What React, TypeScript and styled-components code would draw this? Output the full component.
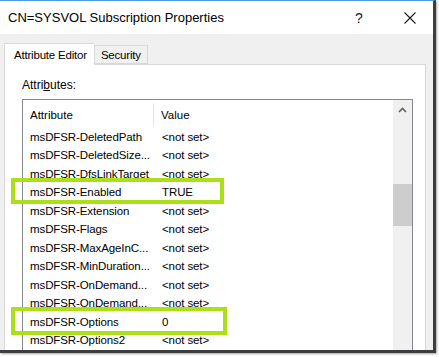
import React from 'react';
import styled, { createGlobalStyle } from 'styled-components';

const GlobalStyle = createGlobalStyle`
  html, body {
    margin: 0;
    padding: 0;
    background: #ffffff;
  }
  body {
    font-family: "Liberation Sans", Arial, sans-serif;
    overflow: hidden;
  }
`;

/** Screenshot frame */
const Frame = styled.div`
  position: relative;
  width: 439px;
  height: 357px;
  background: #ffffff;
  overflow: hidden;
`;

const Window = styled.div`
  display: flex;
  flex-direction: column;
  width: 433px;
  height: 349px;
  border-top: 1px solid #4a9be0;
  border-right: 3px solid #3d3d3d;
  border-bottom: 3px solid #3d3d3d;
  box-shadow: 1px 1px 2px rgba(0, 0, 0, 0.35);
  background: #ffffff;
`;

/** Title bar */
const TitleBar = styled.div`
  display: flex;
  align-items: center;
  height: 33px;
  padding-left: 8px;
  background: #ffffff;
  flex: 0 0 auto;
`;
const Title = styled.span`
  flex: 1 1 auto;
  font-size: 13px;
  color: #000000;
  white-space: nowrap;
`;
const CaptionButton = styled.div<{ $gap?: number }>`
  display: flex;
  align-items: center;
  justify-content: center;
  width: 46px;
  height: 33px;
  margin-right: ${props => props.$gap || 0}px;
  font-size: 14px;
  color: #1a1a1a;
`;

/** Dialog body */
const Body = styled.div`
  display: flex;
  flex-direction: column;
  flex: 1 1 auto;
  min-height: 0;
  padding: 9px 7px 0 4px;
  background: #f0f0f0;
`;
const TabStrip = styled.div`
  display: flex;
  align-items: flex-end;
  height: 21px;
  position: relative;
  z-index: 1;
`;
const Tab = styled.div<{ $active?: boolean }>`
  display: flex;
  align-items: center;
  box-sizing: border-box;
  padding: 0 ${props => (props.$active ? '7px 0 9px' : '6px')};
  height: ${props => (props.$active ? '22px' : '19px')};
  margin-bottom: ${props => (props.$active ? '-1px' : '0')};
  border: 1px solid #d9d9d9;
  border-bottom: ${props => (props.$active ? 'none' : '1px solid #d9d9d9')};
  ${props => (props.$active ? 'border-right: none;' : 'border-left: 1px solid #d9d9d9;')}
  background: ${props => (props.$active ? '#ffffff' : '#f0f0f0')};
  font-size: 11.5px;
  color: #000000;
  letter-spacing: -0.2px;
  white-space: nowrap;
`;
const Panel = styled.div`
  display: flex;
  flex-direction: column;
  flex: 1 1 auto;
  min-height: 0;
  padding: 0 12px 0 17px;
  background: #ffffff;
  border: 1px solid #d9d9d9;
  border-bottom: none;
`;
const Label = styled.div`
  height: 34px;
  padding-top: 13px;
  box-sizing: border-box;
  font-size: 12px;
  color: #000000;
`;
const Accel = styled.span`
  text-decoration: underline;
`;

/** Attribute list */
const ListBox = styled.div`
  display: flex;
  flex: 1 1 auto;
  min-height: 0;
  border: 1px solid #828790;
  border-bottom: none;
  background: #ffffff;
`;
const Table = styled.div`
  flex: 1 1 auto;
  display: flex;
  flex-direction: column;
`;
const HeaderRow = styled.div`
  display: flex;
  height: 27.5px;
  padding-top: 3px;
  box-sizing: border-box;
`;
const HeaderCell = styled.div<{ $first?: boolean }>`
  display: flex;
  align-items: center;
  box-sizing: border-box;
  height: 23px;
  width: ${props => (props.$first ? '131px' : 'auto')};
  padding-left: 7px;
  border-right: ${props => (props.$first ? '1px solid #e5e5e5' : 'none')};
  font-size: 11.5px;
  color: #000000;
`;
const Row = styled.div`
  display: flex;
  align-items: center;
  height: 18.5px;
  font-size: 11.5px;
  letter-spacing: -0.1px;
  color: #000000;
  white-space: nowrap;
`;
const NameCell = styled.span`
  width: 131px;
  padding-left: 7px;
  box-sizing: border-box;
`;
const ValueCell = styled.span`
  padding-left: 8px;
`;

const ScrollBar = styled.div`
  display: flex;
  flex-direction: column;
  width: 19px;
  background: #f0f0f0;
  flex: 0 0 auto;
`;
const ScrollArrow = styled.div`
  display: flex;
  align-items: center;
  justify-content: center;
  height: 20px;
  color: #606060;
`;
const Thumb = styled.div`
  margin-top: 64px;
  height: 42px;
  background: #cdcdcd;
`;

/** Annotation boxes drawn over the screenshot */
const Highlight = styled.div<{ $x: number; $y: number; $w: number; $h: number }>`
  position: absolute;
  left: ${props => props.$x}px;
  top: ${props => props.$y}px;
  width: ${props => props.$w}px;
  height: ${props => props.$h}px;
  box-sizing: border-box;
  border: 4px solid #acdf18;
`;

const rows: [string, string][] = [
  ['msDFSR-DeletedPath', '<not set>'],
  ['msDFSR-DeletedSize...', '<not set>'],
  ['msDFSR-DfsLinkTarget', '<not set>'],
  ['msDFSR-Enabled', 'TRUE'],
  ['msDFSR-Extension', '<not set>'],
  ['msDFSR-Flags', '<not set>'],
  ['msDFSR-MaxAgeInC...', '<not set>'],
  ['msDFSR-MinDuration...', '<not set>'],
  ['msDFSR-OnDemand...', '<not set>'],
  ['msDFSR-OnDemand...', '<not set>'],
  ['msDFSR-Options', '0'],
  ['msDFSR-Options2', '<not set>'],
];

export default function App(): JSX.Element {
  return (
    <Frame>
      <GlobalStyle />
      <Window>
        <TitleBar>
          <Title>CN=SYSVOL Subscription Properties</Title>
          <CaptionButton $gap={5}>?</CaptionButton>
          <CaptionButton>
            <svg width="12" height="12" viewBox="0 0 12 12">
              <path d="M0.5 0.5 L11.5 11.5 M11.5 0.5 L0.5 11.5" stroke="#1a1a1a" strokeWidth="1.1" />
            </svg>
          </CaptionButton>
        </TitleBar>
        <Body>
          <TabStrip>
            <Tab $active>Attribute Editor</Tab>
            <Tab>Security</Tab>
          </TabStrip>
          <Panel>
            <Label>
              Attri<Accel>b</Accel>utes:
            </Label>
            <ListBox>
              <Table>
                <HeaderRow>
                  <HeaderCell $first>Attribute</HeaderCell>
                  <HeaderCell>Value</HeaderCell>
                </HeaderRow>
                {rows.map(([name, value], i) => (
                  <Row key={i}>
                    <NameCell>{name}</NameCell>
                    <ValueCell>{value}</ValueCell>
                  </Row>
                ))}
              </Table>
              <ScrollBar>
                <ScrollArrow>
                  <svg width="9" height="6" viewBox="0 0 9 6">
                    <path d="M1 5 L4.5 1.5 L8 5" fill="none" stroke="#606060" strokeWidth="1.6" />
                  </svg>
                </ScrollArrow>
                <Thumb />
              </ScrollBar>
            </ListBox>
          </Panel>
        </Body>
      </Window>
      <Highlight $x={11} $y={178} $w={213} $h={26} />
      <Highlight $x={11} $y={307} $w={216} $h={28} />
    </Frame>
  );
}
